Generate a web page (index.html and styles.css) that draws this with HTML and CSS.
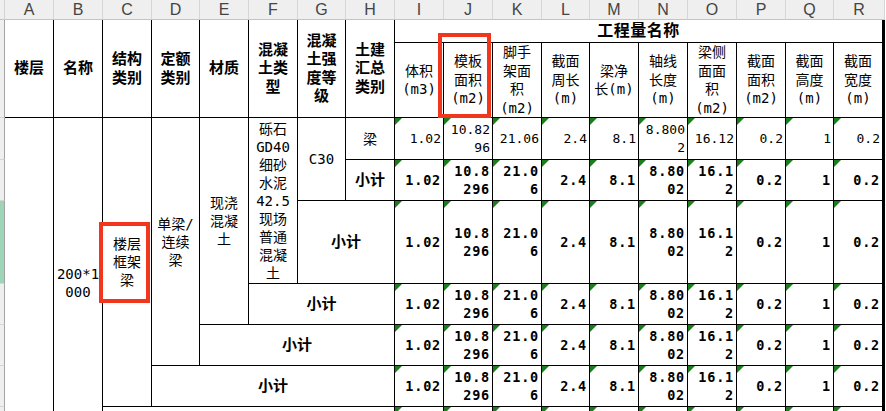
FILE: index.html
```html
<!DOCTYPE html>
<html lang="zh-CN">
<head>
<meta charset="utf-8">
<title>工程量表</title>
<link rel="stylesheet" href="styles.css">
</head>
<body>
<div class="sheet">
  <!-- column letters -->
  <div class="corner"></div>
  <div class="hd">A</div><div class="hd">B</div><div class="hd">C</div><div class="hd">D</div><div class="hd">E</div><div class="hd">F</div><div class="hd">G</div><div class="hd">H</div><div class="hd">I</div><div class="hd">J</div><div class="hd">K</div><div class="hd">L</div><div class="hd">M</div><div class="hd">N</div><div class="hd">O</div><div class="hd">P</div><div class="hd">Q</div><div class="hd">R</div>

  <!-- header rows -->
  <div class="rh rs2"></div>
  <div class="c th rs2"><span>楼层</span></div>
  <div class="c th rs2"><span>名称</span></div>
  <div class="c th rs2"><span>结构<br>类别</span></div>
  <div class="c th rs2"><span>定额<br>类别</span></div>
  <div class="c th rs2"><span>材质</span></div>
  <div class="c th rs2"><span>混凝<br>土类<br>型</span></div>
  <div class="c th rs2"><span>混凝<br>土强<br>度等<br>级</span></div>
  <div class="c th rs2"><span>土建<br>汇总<br>类别</span></div>
  <div class="c th group cs10 last"><span>工程量名称</span></div>

  <div class="c sh"><span>体积<br>(m3)</span></div>
  <div class="c sh"><span>模板<br>面积<br>(m2)</span></div>
  <div class="c sh"><span>脚手<br>架面<br>积<br>(m2)</span></div>
  <div class="c sh"><span>截面<br>周长<br>(m)</span></div>
  <div class="c sh"><span>梁净<br>长(m)</span></div>
  <div class="c sh"><span>轴线<br>长度<br>(m)</span></div>
  <div class="c sh"><span>梁侧<br>面面<br>积<br>(m2)</span></div>
  <div class="c sh"><span>截面<br>面积<br>(m2)</span></div>
  <div class="c sh"><span>截面<br>高度<br>(m)</span></div>
  <div class="c sh last"><span>截面<br>宽度<br>(m)</span></div>

  <!-- data row 1 -->
  <div class="rh"></div>
  <div class="c rs7"></div>
  <div class="c rs7"><span>200*1<br>000</span></div>
  <div class="c rs6"><span>楼层<br>框架<br>梁</span></div>
  <div class="c rs5"><span>单梁/<br>连续<br>梁</span></div>
  <div class="c rs4"><span>现浇<br>混凝<br>土</span></div>
  <div class="c rs3"><span>砾石<br>GD40<br>细砂<br>水泥<br>42.5<br>现场<br>普通<br>混凝<br>土</span></div>
  <div class="c rs2"><span>C30</span></div>
  <div class="c"><span>梁</span></div>
  <div class="c n"><span>1.02</span></div>
  <div class="c n"><span>10.82<br>96</span></div>
  <div class="c n"><span>21.06</span></div>
  <div class="c n"><span>2.4</span></div>
  <div class="c n"><span>8.1</span></div>
  <div class="c n"><span>8.800<br>2</span></div>
  <div class="c n"><span>16.12</span></div>
  <div class="c n"><span>0.2</span></div>
  <div class="c n"><span>1</span></div>
  <div class="c n last"><span>0.2</span></div>

  <!-- data row 2 -->
  <div class="rh"></div>
  <div class="c b"><span>小计</span></div>
  <div class="c n b"><span>1.02</span></div>
  <div class="c n b"><span>10.8<br>296</span></div>
  <div class="c n b"><span>21.0<br>6</span></div>
  <div class="c n b"><span>2.4</span></div>
  <div class="c n b"><span>8.1</span></div>
  <div class="c n b"><span>8.80<br>02</span></div>
  <div class="c n b"><span>16.1<br>2</span></div>
  <div class="c n b"><span>0.2</span></div>
  <div class="c n b"><span>1</span></div>
  <div class="c n b last"><span>0.2</span></div>

  <!-- data row 3 -->
  <div class="rh sel"></div>
  <div class="c b cs2"><span>小计</span></div>
  <div class="c n b"><span>1.02</span></div>
  <div class="c n b"><span>10.8<br>296</span></div>
  <div class="c n b"><span>21.0<br>6</span></div>
  <div class="c n b"><span>2.4</span></div>
  <div class="c n b"><span>8.1</span></div>
  <div class="c n b"><span>8.80<br>02</span></div>
  <div class="c n b"><span>16.1<br>2</span></div>
  <div class="c n b"><span>0.2</span></div>
  <div class="c n b"><span>1</span></div>
  <div class="c n b last"><span>0.2</span></div>

  <!-- data row 4 -->
  <div class="rh"></div>
  <div class="c b cs3"><span>小计</span></div>
  <div class="c n b"><span>1.02</span></div>
  <div class="c n b"><span>10.8<br>296</span></div>
  <div class="c n b"><span>21.0<br>6</span></div>
  <div class="c n b"><span>2.4</span></div>
  <div class="c n b"><span>8.1</span></div>
  <div class="c n b"><span>8.80<br>02</span></div>
  <div class="c n b"><span>16.1<br>2</span></div>
  <div class="c n b"><span>0.2</span></div>
  <div class="c n b"><span>1</span></div>
  <div class="c n b last"><span>0.2</span></div>

  <!-- data row 5 -->
  <div class="rh"></div>
  <div class="c b cs4"><span>小计</span></div>
  <div class="c n b"><span>1.02</span></div>
  <div class="c n b"><span>10.8<br>296</span></div>
  <div class="c n b"><span>21.0<br>6</span></div>
  <div class="c n b"><span>2.4</span></div>
  <div class="c n b"><span>8.1</span></div>
  <div class="c n b"><span>8.80<br>02</span></div>
  <div class="c n b"><span>16.1<br>2</span></div>
  <div class="c n b"><span>0.2</span></div>
  <div class="c n b"><span>1</span></div>
  <div class="c n b last"><span>0.2</span></div>

  <!-- data row 6 -->
  <div class="rh"></div>
  <div class="c b cs5"><span>小计</span></div>
  <div class="c n b"><span>1.02</span></div>
  <div class="c n b"><span>10.8<br>296</span></div>
  <div class="c n b"><span>21.0<br>6</span></div>
  <div class="c n b"><span>2.4</span></div>
  <div class="c n b"><span>8.1</span></div>
  <div class="c n b"><span>8.80<br>02</span></div>
  <div class="c n b"><span>16.1<br>2</span></div>
  <div class="c n b"><span>0.2</span></div>
  <div class="c n b"><span>1</span></div>
  <div class="c n b last"><span>0.2</span></div>

  <!-- data row 7 (only its top edge is in view) -->
  <div class="rh"></div>
  <div class="c cs6"></div>
  <div class="c n"></div>
  <div class="c n"></div>
  <div class="c n"></div>
  <div class="c n"></div>
  <div class="c n"></div>
  <div class="c n"></div>
  <div class="c n"></div>
  <div class="c n"></div>
  <div class="c n"></div>
  <div class="c n last"></div>

  <div class="mark mark-j"></div>
  <div class="mark mark-c"></div>
</div>
</body>
</html>
```

FILE: styles.css
```css
html, body {
  margin: 0;
  padding: 0;
  background: #ffffff;
}
body {
  width: 886px;
  height: 411px;
  overflow: hidden;
}
.sheet {
  position: relative;
  display: grid;
  width: 885px;
  grid-template-columns: 5px 49px 49px 49px 48px 49px 49px 48px 49px 49px 49px 49px 48px 49px 49px 49px 49px 48px 51px;
  grid-template-rows: 20px 23px 75px 42px 41px 83px 41px 41px 41px 41px;
  font-family: "DejaVu Sans Mono", "Noto Sans CJK SC", monospace;
  font-size: 14px;
  line-height: 18px;
  color: #000;
}
.corner {
  background: #efefef;
  border-right: 1px solid #d4d4d4;
  border-bottom: 1px solid #c4c4c4;
}
.hd {
  box-sizing: border-box;
  background: #efefef;
  border-right: 1px solid #d6d6d6;
  border-bottom: 1px solid #c4c4c4;
  font-family: "Liberation Sans", Arial, sans-serif;
  font-size: 16px;
  line-height: 19px;
  color: #444;
  text-align: center;
}
.rh {
  grid-column: 1;
  box-sizing: border-box;
  background: #efefef;
  border-right: 1px solid #a3a3a3;
  border-bottom: 1px solid #d4d4d4;
}
.rh.sel {
  background: #9fd5b7;
}
.c {
  position: relative;
  box-sizing: border-box;
  border-right: 1px solid #000;
  border-bottom: 1px solid #000;
  display: flex;
  align-items: center;
  justify-content: center;
  text-align: center;
  overflow: hidden;
  white-space: nowrap;
}
.c.last {
  border-right: 3px solid #000;
}
.th {
  font-weight: 700;
  font-size: 15px;
  line-height: 18.5px;
}
.th.group {
  font-size: 16px;
  letter-spacing: 0.5px;
}
.sh {
  font-size: 14px;
  line-height: 18.5px;
}
.b {
  font-weight: 700;
  font-size: 15px;
}
.n {
  justify-content: flex-end;
  text-align: right;
  padding-right: 2px;
  font-size: 13px;
  letter-spacing: 0;
}
.n.b {
  font-size: 13.5px;
  letter-spacing: 0.8px;
  padding-right: 2px;
}
.n::before {
  content: "";
  position: absolute;
  left: 0;
  top: 0;
  width: 7px;
  height: 7px;
  background: #1b7d1b;
  clip-path: polygon(0 0, 100% 0, 0 100%);
}
.rs2 { grid-row: span 2; }
.rs3 { grid-row: span 3; }
.rs4 { grid-row: span 4; }
.rs5 { grid-row: span 5; }
.rs6 { grid-row: span 6; }
.rs7 { grid-row: span 7; }
.cs2 { grid-column: span 2; }
.cs3 { grid-column: span 3; }
.cs4 { grid-column: span 4; }
.cs5 { grid-column: span 5; }
.cs6 { grid-column: span 6; }
.cs10 { grid-column: span 10; }
.mark {
  position: absolute;
  box-sizing: border-box;
  border: 4px solid #f2351d;
  pointer-events: none;
}
.mark-j {
  left: 438px;
  top: 33px;
  width: 53px;
  height: 85px;
}
.mark-c {
  left: 99px;
  top: 222px;
  width: 51px;
  height: 81px;
}
```
